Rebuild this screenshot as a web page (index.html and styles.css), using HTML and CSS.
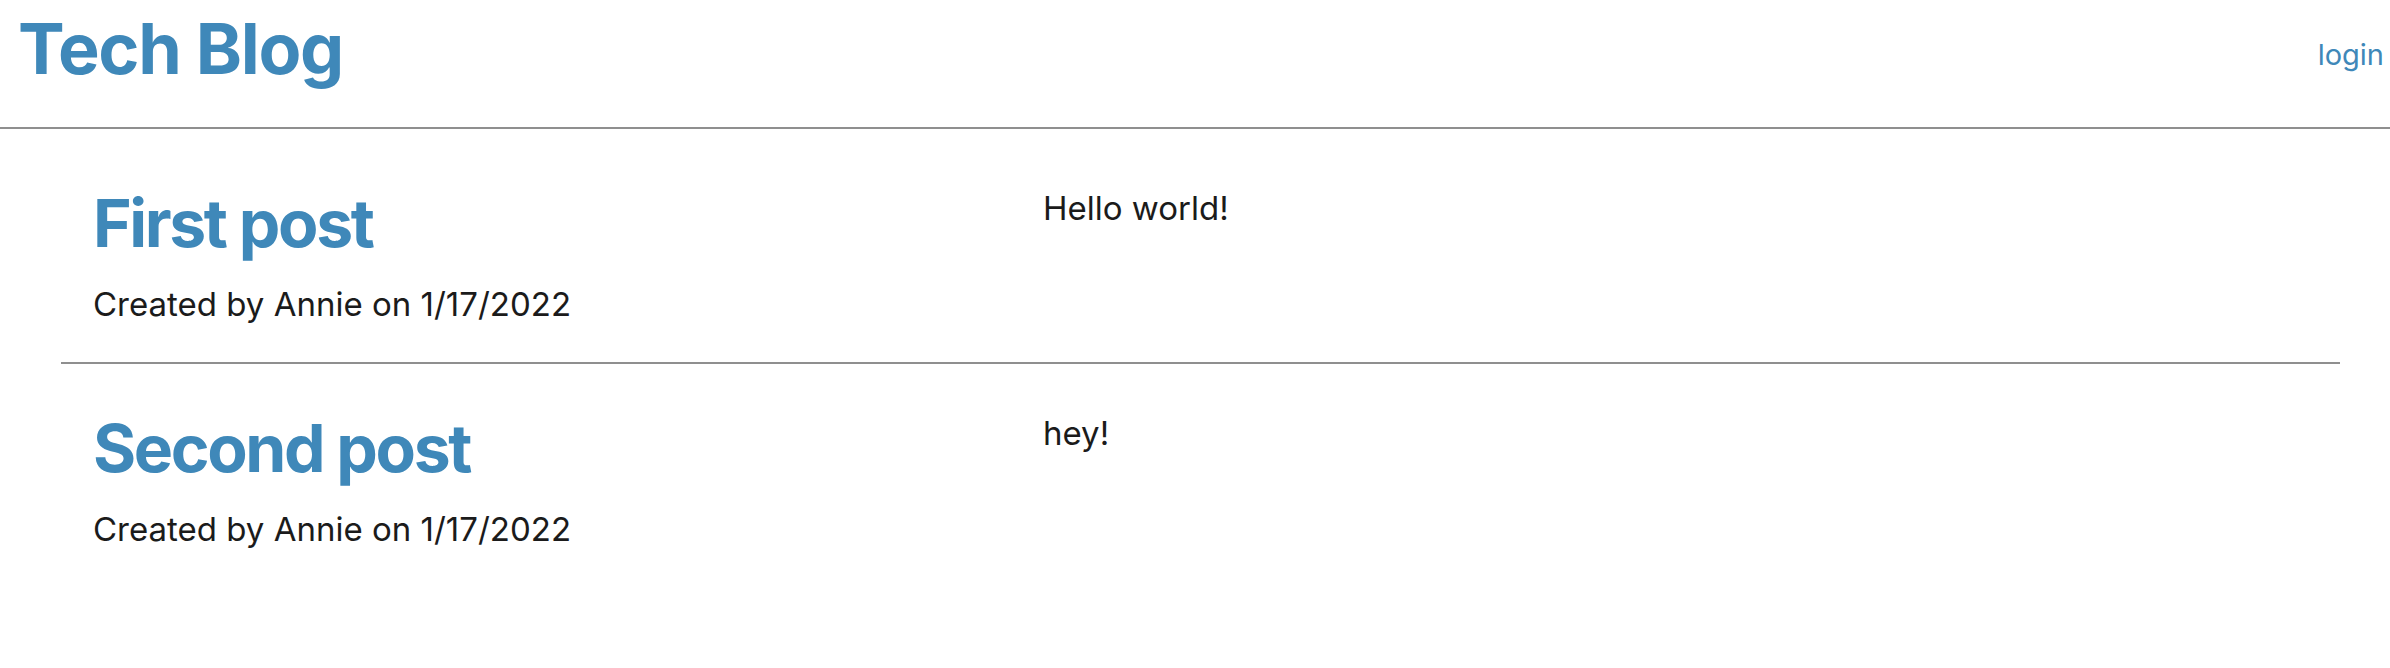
FILE: index.html
```html
<!DOCTYPE html>
<html lang="en">
<head>
<meta charset="utf-8">
<title>Tech Blog</title>
<link rel="stylesheet" href="styles.css">
</head>
<body>
<header class="site-header">
  <h1 class="logo">Tech Blog</h1>
  <nav class="nav"><a class="nav-link" href="#">login</a></nav>
</header>
<main class="posts">
  <article class="post">
    <div class="post-meta">
      <h2 class="post-title">First post</h2>
      <p class="post-byline">Created by Annie on 1/17/2022</p>
    </div>
    <p class="post-body">Hello world!</p>
  </article>
  <article class="post post-last">
    <div class="post-meta">
      <h2 class="post-title">Second post</h2>
      <p class="post-byline">Created by Annie on 1/17/2022</p>
    </div>
    <p class="post-body">hey!</p>
  </article>
</main>
</body>
</html>
```

FILE: styles.css
```css
html, body {
  margin: 0;
  padding: 0;
  background: #ffffff;
}

body {
  font-family: Inter, "Noto Sans", sans-serif;
  color: #1b1b1b;
}

.site-header {
  display: flex;
  justify-content: space-between;
  align-items: flex-start;
  padding: 6px 6px 36px 18px;
  border-bottom: 2px solid #8f8f8f;
}

.logo {
  margin: 0;
  font-size: 70px;
  font-weight: 700;
  line-height: normal;
  color: #3f88b9;
  letter-spacing: -1.3px;
}

.nav {
  margin-top: 31px;
}

.nav-link {
  font-size: 29px;
  line-height: normal;
  color: #3f88b9;
  text-decoration: none;
}

.posts {
  padding: 10px 50px 0 61px;
}

.post {
  display: grid;
  grid-template-columns: 950px 1fr;
  padding: 44px 32px 38px;
  border-bottom: 2px solid #8f8f8f;
}

.post-last {
  border-bottom: none;
}

.post-title {
  margin: 0;
  font-size: 66px;
  font-weight: 700;
  line-height: normal;
  color: #3f88b9;
  letter-spacing: -2.4px;
}

.post-byline {
  margin: 21px 0 0;
  font-size: 33px;
  line-height: normal;
}

.post-body {
  margin: 5px 0 0;
  font-size: 33px;
  line-height: normal;
}
```
